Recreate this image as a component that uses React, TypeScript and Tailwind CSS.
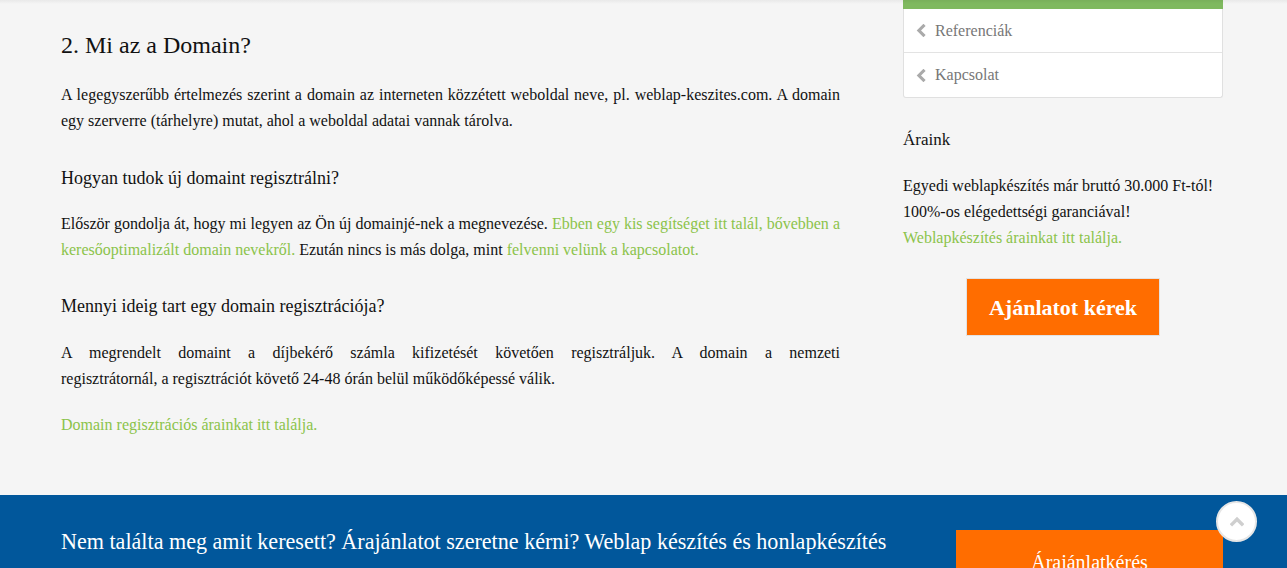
import React from 'react';

const Chevron: React.FC<{ dir: 'left' | 'up'; className?: string }> = ({ dir, className }) => (
  <svg viewBox="0 0 10 10" className={className} fill="none" stroke="currentColor" strokeWidth={2.4} strokeLinecap="square">
    {dir === 'left' ? <polyline points="6.5,1.5 3,5 6.5,8.5" /> : <polyline points="1.5,6.5 5,3 8.5,6.5" />}
  </svg>
);

const link = 'text-[#8bc34a]';

export default function App() {
  return (
    <div className="relative min-h-[568px] bg-[#f5f5f5] text-[#111] font-['Liberation_Serif',serif]">
      {/* faint header shadow */}
      <div className="absolute inset-x-0 top-0 h-[4px] bg-gradient-to-b from-black/5 to-transparent z-10" />

      <div className="flex pl-[61px] pr-[64px] gap-[63px]">
        {/* Main article */}
        <main className="w-[779px] pt-[32px] pb-[57px]">
          <h2 className="text-[24px] leading-[26px]">2. Mi az a Domain?</h2>
          <p className="mt-[24px] text-[16px] leading-[26px] text-justify">
            A legegyszerűbb értelmezés szerint a domain az interneten közzétett weboldal neve, pl. weblap-keszites.com. A domain
            egy szerverre (tárhelyre) mutat, ahol a weboldal adatai vannak tárolva.
          </p>

          <h3 className="mt-[33px] text-[18px] leading-[22px]">Hogyan tudok új domaint regisztrálni?</h3>
          <p className="mt-[22px] text-[16px] leading-[26px] text-justify">
            Először gondolja át, hogy mi legyen az Ön új domainjé-nek a megnevezése.{' '}
            <span className={link}>Ebben egy kis segítséget itt talál, bővebben a keresőoptimalizált domain nevekről.</span>{' '}
            Ezután nincs is más dolga, mint <span className={link}>felvenni velünk a kapcsolatot.</span>
          </p>

          <h3 className="mt-[32px] text-[18px] leading-[22px]">Mennyi ideig tart egy domain regisztrációja?</h3>
          <p className="mt-[23px] text-[16px] leading-[26px]">
            <span className="block text-justify [text-align-last:justify]">
              A megrendelt domaint a díjbekérő számla kifizetését követően regisztráljuk. A domain a nemzeti
            </span>
            <span className="block">regisztrátornál, a regisztrációt követő 24-48 órán belül működőképessé válik.</span>
          </p>

          <p className={`mt-[20px] text-[16px] leading-[26px] ${link}`}>Domain regisztrációs árainkat itt találja.</p>
        </main>

        {/* Sidebar */}
        <aside className="w-[320px]">
          <div className="bg-white border border-[#e0e0e0] border-t-0 rounded-b-[3px]">
            <div className="h-[9px] bg-[#7fb95f] -mx-px" />
            <div className="flex items-center h-[44px] pl-[11px] gap-[7px] text-[16px] text-[#777] border-b border-[#e3e3e3]">
              <Chevron dir="left" className="w-[13px] h-[13px] text-[#aaa]" />
              <span>Referenciák</span>
            </div>
            <div className="flex items-center h-[44px] pl-[11px] gap-[7px] text-[16px] text-[#777]">
              <Chevron dir="left" className="w-[13px] h-[13px] text-[#aaa]" />
              <span>Kapcsolat</span>
            </div>
          </div>

          <h4 className="mt-[31px] text-[17px] leading-[22px]">Áraink</h4>
          <p className="mt-[22px] text-[16px] leading-[26px]">
            Egyedi weblapkészítés már bruttó 30.000 Ft-tól!
            <br />
            100%-os elégedettségi garanciával!
            <br />
            <span className={link}>Weblapkészítés árainkat itt találja.</span>
          </p>
          <div className="flex justify-center mt-[27px]">
            <button className="w-[194px] h-[58px] bg-[#ff6d00] border border-[#e2e2e2] text-white font-bold text-[22px]">
              Ajánlatot kérek
            </button>
          </div>
        </aside>
      </div>

      {/* Footer call to action */}
      <footer className="bg-[#01579b] h-[73px] overflow-hidden flex items-start justify-between pl-[61px] pr-[64px] pt-[33px]">
        <p className="text-white text-[22.1px] leading-[28px]">
          Nem találta meg amit keresett? Árajánlatot szeretne kérni? Weblap készítés és honlapkészítés
        </p>
        <div className="mt-[2px] w-[267px] h-[60px] bg-[#ff6d00] text-white text-[20px] leading-[24px] flex justify-center pt-[20px]">
          Árajánlatkérés
        </div>
      </footer>

      {/* Scroll to top */}
      <div className="absolute right-[30px] bottom-[26px] w-[41px] h-[41px] rounded-full bg-white border-2 border-[#e6e6e6] flex items-center justify-center">
        <Chevron dir="up" className="w-[14px] h-[14px] text-[#cfcfcf]" />
      </div>
    </div>
  );
}
